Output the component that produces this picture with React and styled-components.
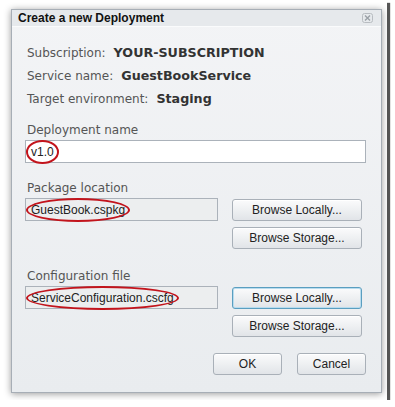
import React from "react";
import styled, { createGlobalStyle } from "styled-components";

const Global = createGlobalStyle`
  html, body {
    margin: 0;
    padding: 0;
    background: #fff;
  }
  body {
    font-family: "DejaVu Sans", Verdana, sans-serif;
  }
`;

const Shot = styled.div`
  width: 387px;
  height: 400px;
  background: #fff;
  box-shadow: 3px 3px 1px rgba(30, 30, 30, 0.75);
  padding: 9px 0 0 11px;
  box-sizing: border-box;
`;

const Dialog = styled.div`
  width: 371px;
  height: 384px;
  box-sizing: border-box;
  border: 1px solid #a7aeb6;
  background: linear-gradient(#f3f4f6, #e9ecef);
  box-shadow: 0 1px 7px rgba(0, 0, 0, 0.4);
  display: flex;
  flex-direction: column;
`;

const TitleBar = styled.div`
  height: 16px;
  display: flex;
  align-items: center;
  justify-content: space-between;
  padding: 0 8px 0 6px;
  background: #e6e9ec;
  border-bottom: 1px solid #fafbfc;
  font-family: "Liberation Sans", Arial, sans-serif;
  font-size: 12px;
  font-weight: bold;
  color: #111;
`;

const Body = styled.div`
  flex: 1;
  display: flex;
  flex-direction: column;
  padding: 14px 14px 0 13px;
`;

const InfoRow = styled.div`
  font-size: 12px;
  color: #555;
  height: 23px;
  line-height: 23px;
  padding-left: 2px;
`;

const Value = styled.b`
  color: #333;
  font-size: 12.7px;
  margin-left: 8px;
`;

const Label = styled.div`
  font-size: 12px;
  color: #555;
  padding-left: 2px;
  margin-top: ${(p) => p.$top || 0}px;
  height: 20px;
  line-height: 20px;
`;

const Field = styled.div`
  height: 23px;
  box-sizing: border-box;
  border: 1px solid #abb2ba;
  background: ${(p) => (p.$readOnly ? "#eceeef" : "#fff")};
  width: ${(p) => (p.$wide ? "341px" : "193px")};
  display: flex;
  align-items: center;
  padding-left: 5px;
  font-family: "Liberation Sans", Arial, sans-serif;
  font-size: 12px;
  color: #222;
`;

const Circled = styled.span`
  position: relative;
  display: inline-block;
  &::after {
    content: "";
    position: absolute;
    left: -5px;
    right: -5px;
    top: -5px;
    bottom: -5px;
    border: 2px solid #c2141c;
    border-radius: 50%;
  }
`;

const FileRow = styled.div`
  display: flex;
  gap: 14px;
`;

const Buttons = styled.div`
  display: flex;
  flex-direction: column;
  gap: 6px;
  padding-top: 1px;
`;

const Button = styled.button`
  width: ${(p) => p.$w || 130}px;
  height: 22px;
  box-sizing: border-box;
  border: 1px solid ${(p) => (p.$focus ? "#5a9ec0" : "#a9b0b8")};
  box-shadow: ${(p) =>
    p.$focus ? "inset 0 0 0 1px #b8dcee" : "inset 0 1px 0 #fff"};
  border-radius: 3px;
  background: linear-gradient(#fbfbfc, #eef0f2 50%, #e1e4e8);
  font-family: "Liberation Sans", Arial, sans-serif;
  font-size: 12px;
  color: #222;
  padding: 0;
  cursor: pointer;
`;

const Footer = styled.div`
  display: flex;
  justify-content: flex-end;
  gap: 15px;
  margin-top: 16px;
  padding-right: 1px;
`;

function CloseIcon() {
  return (
    <svg width="11" height="10" viewBox="0 0 11 10">
      <rect x="0.5" y="0.5" width="10" height="9" rx="2" fill="none" stroke="#b8bcc1" />
      <path d="M3 2.5 L8 7.5 M8 2.5 L3 7.5" stroke="#9aa0a6" strokeWidth="1.4" />
    </svg>
  );
}

export default function App() {
  return (
    <>
      <Global />
      <Shot>
        <Dialog>
          <TitleBar>
            <span>Create a new Deployment</span>
            <CloseIcon />
          </TitleBar>
          <Body>
            <InfoRow>
              Subscription:<Value>YOUR-SUBSCRIPTION</Value>
            </InfoRow>
            <InfoRow>
              Service name:<Value>GuestBookService</Value>
            </InfoRow>
            <InfoRow>
              Target environment:<Value>Staging</Value>
            </InfoRow>

            <Label $top={10}>Deployment name</Label>
            <Field $wide>
              <Circled>v1.0</Circled>
            </Field>

            <Label $top={15}>Package location</Label>
            <FileRow>
              <Field $readOnly>
                <Circled>GuestBook.cspkg</Circled>
              </Field>
              <Buttons>
                <Button>Browse Locally...</Button>
                <Button>Browse Storage...</Button>
              </Buttons>
            </FileRow>

            <Label $top={17}>Configuration file</Label>
            <FileRow>
              <Field $readOnly>
                <Circled>ServiceConfiguration.cscfg</Circled>
              </Field>
              <Buttons>
                <Button $focus>Browse Locally...</Button>
                <Button>Browse Storage...</Button>
              </Buttons>
            </FileRow>

            <Footer>
              <Button $w={69}>OK</Button>
              <Button $w={69}>Cancel</Button>
            </Footer>
          </Body>
        </Dialog>
      </Shot>
    </>
  );
}
